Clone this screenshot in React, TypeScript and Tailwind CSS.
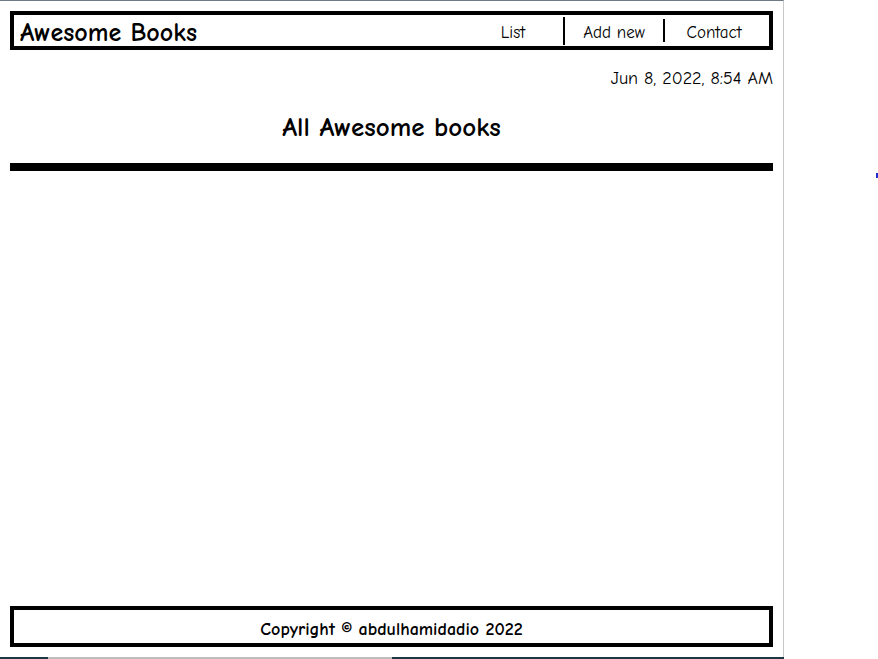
export default function App() {
  const font = { fontFamily: '"Comic Sans MS", "Comic Neue", "Liberation Sans", sans-serif' };
  return (
    <div className="relative h-[659px] w-[878px] overflow-hidden bg-white text-black" style={font}>
      <div className="flex h-[657px] w-[784px] flex-col border-t border-r border-t-[#6f7b84] border-r-[#c8c8c8] px-[10px]">
        <header className="mt-[10px] flex h-[39px] items-center justify-between border-4 border-black pl-[6px] pr-[6px]">
          <h1 className="pt-[5px] text-[26px] font-bold leading-none">Awesome Books</h1>
          <ul className="flex items-center text-[17px] leading-none">
            <li className="flex h-[28px] w-[100px] items-center justify-center pt-[3px]">List</li>
            <li className="flex h-[28px] w-[100px] items-center justify-center border-l-2 border-black pt-[3px]">Add new</li>
            <li className="flex h-[23px] w-[100px] items-center justify-center border-l-2 border-black pt-[3px]">Contact</li>
          </ul>
        </header>

        <p className="mt-[17px] text-right text-[18px] leading-[24px]">Jun 8, 2022, 8:54 AM</p>

        <h2 className="mt-[20px] text-center text-[27px] font-bold leading-[34px]">All Awesome books</h2>

        <div className="mt-[18px] h-[8px] bg-black" />

        <footer className="mb-[10px] mt-auto flex h-[41px] items-center justify-center border-4 border-black pt-[6px]">
          <p className="text-[18px] font-bold leading-none">Copyright © abdulhamidadio 2022</p>
        </footer>
      </div>
      <div className="flex h-[2px] w-[784px]">
        <div className="w-[48px] bg-[#1f3644]" />
        <div className="w-[344px] bg-[#bdbdbd]" />
        <div className="flex-1 bg-[#1f3644]" />
      </div>
      <span className="absolute left-[876px] top-[173px] h-[5px] w-[2px] bg-[#1d2fd0]" />
    </div>
  );
}
